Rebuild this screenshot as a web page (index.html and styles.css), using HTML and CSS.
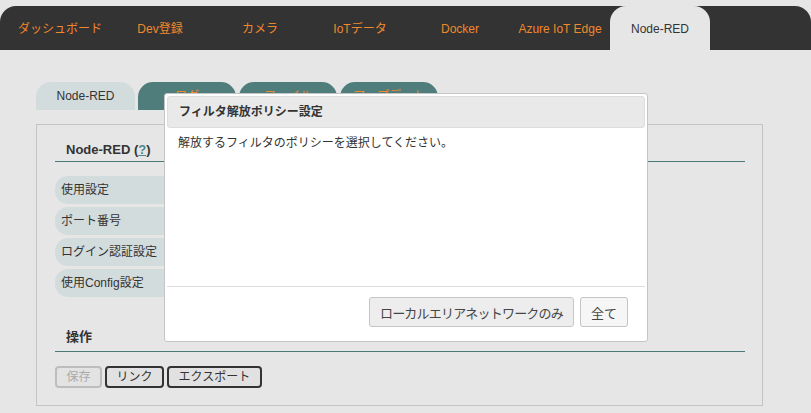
FILE: index.html
```html
<!DOCTYPE html>
<html lang="ja">
<head>
<meta charset="utf-8">
<title>Node-RED</title>
<link rel="stylesheet" href="styles.css">
</head>
<body>
<nav class="nav">
  <div class="nav-item">ダッシュボード</div>
  <div class="nav-item">Dev登録</div>
  <div class="nav-item">カメラ</div>
  <div class="nav-item">IoTデータ</div>
  <div class="nav-item">Docker</div>
  <div class="nav-item">Azure IoT Edge</div>
  <div class="nav-item active">Node-RED</div>
</nav>

<main class="main">
  <div class="tabs">
    <div class="tab active">Node-RED</div>
    <div class="tab">ログ</div>
    <div class="tab">ファイル</div>
    <div class="tab">アップデート</div>
  </div>

  <section class="panel">
    <h2 class="heading first">Node-RED (<span class="help">?</span>)</h2>
    <div class="rows">
      <div class="row"><div class="row-label">使用設定</div></div>
      <div class="row"><div class="row-label">ポート番号</div></div>
      <div class="row"><div class="row-label">ログイン認証設定</div></div>
      <div class="row"><div class="row-label">使用Config設定</div></div>
    </div>
    <h2 class="heading second">操作</h2>
    <div class="actions">
      <button class="btn" disabled>保存</button>
      <button class="btn">リンク</button>
      <button class="btn">エクスポート</button>
    </div>
  </section>
</main>

<div class="dialog">
  <div class="dialog-title">フィルタ解放ポリシー設定</div>
  <div class="dialog-body">解放するフィルタのポリシーを選択してください。</div>
  <div class="dialog-footer">
    <button class="dbtn focus">ローカルエリアネットワークのみ</button>
    <button class="dbtn">全て</button>
  </div>
</div>
</body>
</html>
```

FILE: styles.css
```css
* { box-sizing: border-box; }

body {
  margin: 0;
  background: #e6e6e6;
  font-family: "Liberation Sans", "Noto Sans CJK JP", sans-serif;
  font-size: 12px;
  color: #333;
}

.nav {
  margin-top: 6px;
  height: 44px;
  background: #333333;
  border-radius: 16px 16px 0 0;
  display: flex;
  padding-left: 10px;
}

.nav-item {
  width: 100px;
  text-align: center;
  line-height: 44px;
  padding-top: 1px;
  color: #f0882c;
  font-size: 12px;
}

.nav-item.active {
  background: #e6e6e6;
  color: #333;
  border-radius: 16px 16px 0 0;
}

.main {
  padding-top: 32px;
  padding-left: 36px;
}

.tabs {
  display: flex;
  gap: 3px;
}

.tab {
  width: 98px;
  height: 28px;
  line-height: 28px;
  text-align: center;
  background: #4e7d7b;
  color: #f0882c;
  border-radius: 15px 15px 0 0;
  font-size: 12px;
}

.tab.active {
  width: 99px;
  background: #d3dcdd;
  color: #333;
}

.panel {
  margin-top: 14px;
  width: 727px;
  border: 1px solid #c4c4c4;
  padding: 15px 17px 17px 18px;
}

.heading {
  margin: 0;
  font-size: 13px;
  font-weight: bold;
  line-height: 20px;
  padding-left: 11px;
  border-bottom: 1px solid #4a7a78;
  color: #333;
}

.heading.first { padding-bottom: 1px; }

.heading.second {
  margin-top: 30px;
  padding-bottom: 4px;
}

.help {
  color: #4a8a8f;
  text-decoration: underline;
}

.rows {
  margin-top: 14px;
  display: flex;
  flex-direction: column;
  gap: 3px;
}

.row { display: flex; }

.row-label {
  width: 150px;
  height: 28px;
  line-height: 28px;
  padding-left: 6px;
  background: #d3dcdd;
  border-radius: 13px 0 0 13px;
  font-size: 12px;
  color: #333;
}

.actions {
  margin-top: 14px;
  display: flex;
  gap: 3px;
}

.btn {
  font-family: inherit;
  font-size: 12px;
  height: 22px;
  line-height: 18px;
  padding: 0 9.5px;
  border: 2px solid #333;
  border-radius: 4px;
  background: #e1e1e1;
  color: #333;
}

.btn:disabled {
  border-color: #bdbdbd;
  color: #aaa;
  background: #e3e3e3;
}

.dialog {
  position: absolute;
  left: 164px;
  top: 93px;
  width: 484px;
  height: 249px;
  border: 1px solid #c5c5c5;
  border-radius: 3px;
  background: #fff;
  padding: 2px;
  display: flex;
  flex-direction: column;
}

.dialog-title {
  height: 32px;
  line-height: 30px;
  border: 1px solid #dddddd;
  border-radius: 3px;
  background: #e9e9e9;
  padding-left: 11px;
  font-weight: bold;
  font-size: 12px;
  color: #333;
}

.dialog-body {
  flex: 1;
  padding: 5px 11px;
  line-height: 20px;
  font-size: 12px;
  color: #333;
}

.dialog-footer {
  border-top: 1px solid #dddddd;
  padding: 10px 17px 0 0;
  height: 53px;
  display: flex;
  justify-content: flex-end;
  gap: 6px;
}

.dbtn {
  font-family: inherit;
  font-size: 13px;
  height: 30px;
  padding: 0 10px;
  border: 1px solid #c5c5c5;
  border-radius: 3px;
  background: #f6f6f6;
  color: #454545;
}

.dbtn.focus {
  background: #ededed;
  letter-spacing: -0.8px;
}
```
